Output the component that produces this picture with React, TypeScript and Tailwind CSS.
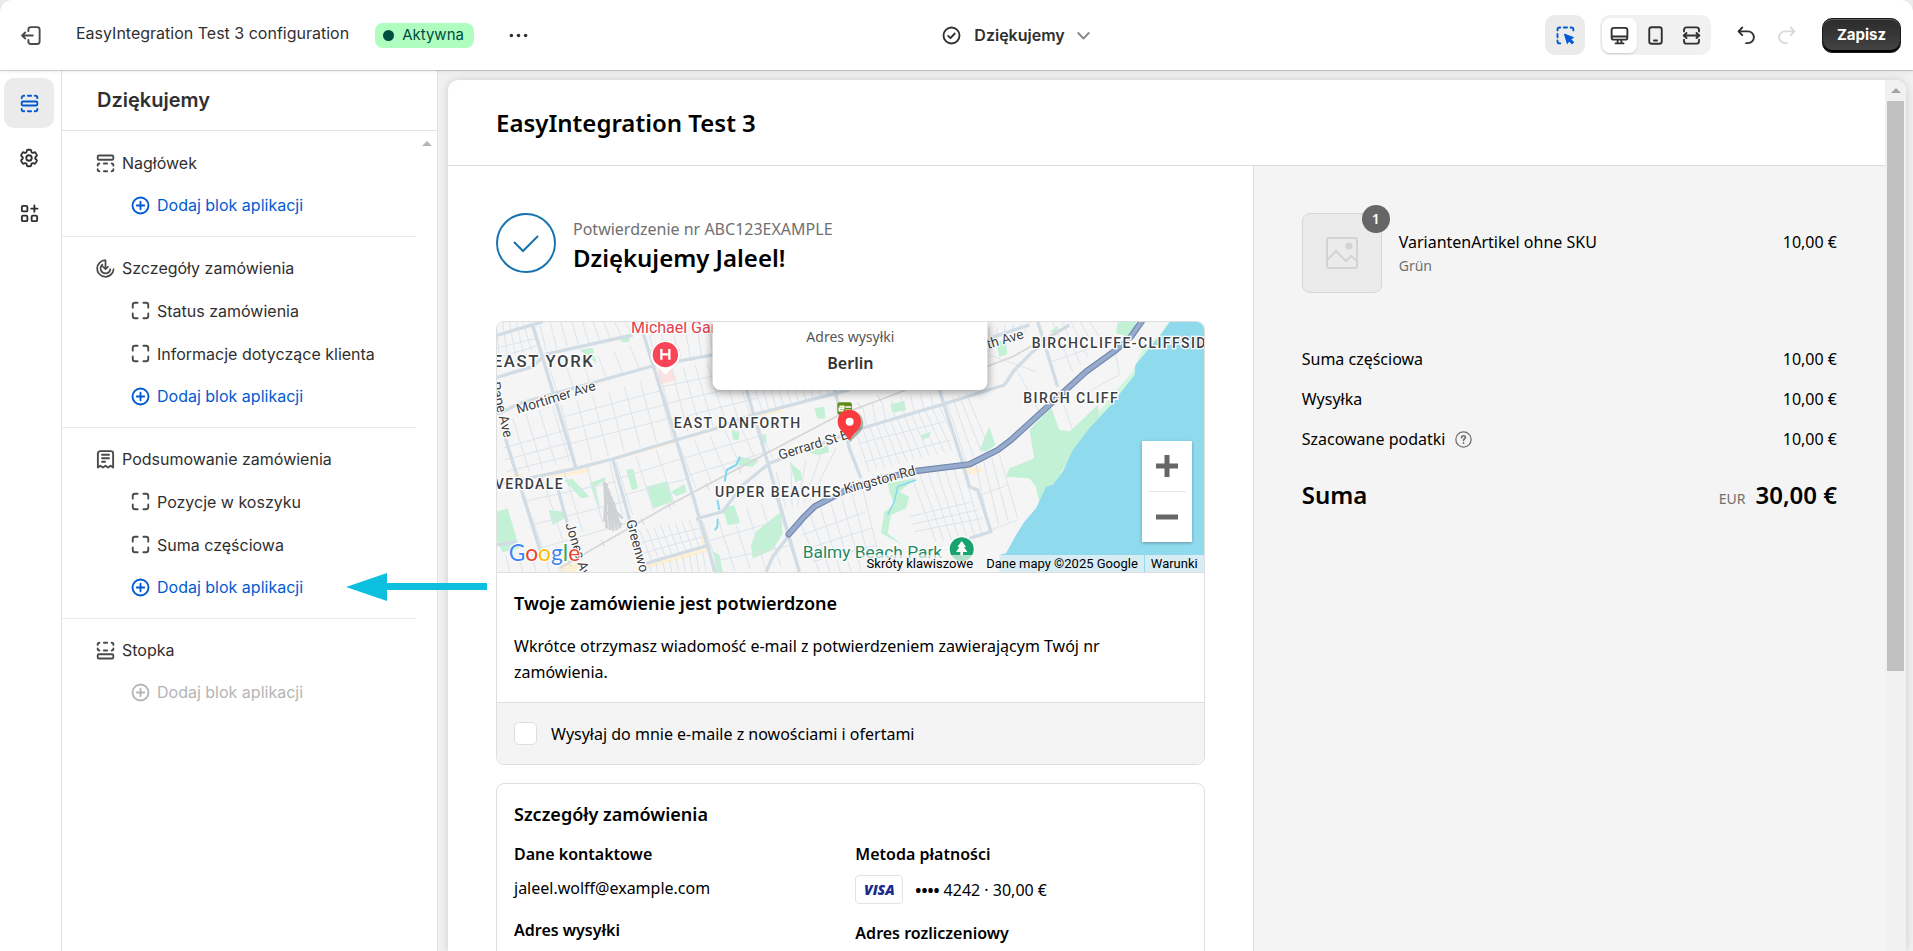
import type { ReactNode } from "react";
import clsx from "clsx";
import { HiOutlineCog6Tooth } from "react-icons/hi2";

/* Icons */

function Icon({ children, className = "size-[25px]" }: { children: ReactNode; className?: string }) {
  return (
    <svg
      viewBox="0 0 20 20"
      fill="none"
      stroke="currentColor"
      strokeWidth={1.5}
      strokeLinecap="round"
      strokeLinejoin="round"
      className={clsx("shrink-0", className)}
      aria-hidden="true"
    >
      {children}
    </svg>
  );
}

const ExitIcon = () => (
  <Icon>
    <path d="M7.5 6.5V5.25a2 2 0 0 1 2-2h5a2 2 0 0 1 2 2v9.5a2 2 0 0 1-2 2h-5a2 2 0 0 1-2-2V13.5M11 10H2.75M5 7.5 2.5 10 5 12.5" />
  </Icon>
);

const SectionsIcon = () => (
  <Icon>
    <rect x="3.75" y="8.4" width="12.5" height="3.2" rx="1" />
    <path d="M3.75 5.7v-.2a1.7 1.7 0 0 1 1.7-1.7h.3M8.7 3.8h2.6M14.2 3.8h.4a1.7 1.7 0 0 1 1.7 1.7v.2M3.75 14.3v.2a1.7 1.7 0 0 0 1.7 1.7h.3M8.7 16.2h2.6M14.2 16.2h.4a1.7 1.7 0 0 0 1.7-1.7v-.2" />
  </Icon>
);

const AppsIcon = () => (
  <Icon>
    <rect x="3.9" y="3.9" width="4.4" height="4.4" rx="1" />
    <rect x="3.9" y="11.7" width="4.4" height="4.4" rx="1" />
    <rect x="11.7" y="11.7" width="4.4" height="4.4" rx="1" />
    <path d="M13.9 3.6v5M11.4 6.1h5" />
  </Icon>
);

const HeaderIcon = () => (
  <Icon>
    <rect x="3.75" y="3.6" width="12.5" height="3.4" rx="1" />
    <path d="M3.75 11.7v-.3a1.4 1.4 0 0 1 1.4-1.4M8.7 10h2.6M14.9 10a1.4 1.4 0 0 1 1.4 1.4v.3M3.75 14.5v.3a1.4 1.4 0 0 0 1.4 1.4M8.7 16.2h2.6M14.9 16.2a1.4 1.4 0 0 0 1.4-1.4v-.3" />
  </Icon>
);

const FooterIcon = () => (
  <Icon>
    <rect x="3.75" y="13" width="12.5" height="3.4" rx="1" />
    <path d="M3.75 5.5v-.3a1.4 1.4 0 0 1 1.4-1.4M8.7 3.8h2.6M14.9 3.8a1.4 1.4 0 0 1 1.4 1.4v.3M3.75 8.3v.3a1.4 1.4 0 0 0 1.4 1.4M8.7 10h2.6M14.9 10a1.4 1.4 0 0 0 1.4-1.4v-.3" />
  </Icon>
);

const OrderStatusIcon = () => (
  <Icon>
    <path d="M10 3.4a6.6 6.6 0 1 0 6.5 7.2M10 3.4V10M8 8.6l2 2 2-2M7.5 7a3.9 3.9 0 0 0 2.5 6.9 3.9 3.9 0 0 0 3.8-3.3" strokeWidth={1.4} />
  </Icon>
);

const ReceiptIcon = () => (
  <Icon>
    <path d="M3.9 16.4V5.2a1.9 1.9 0 0 1 1.9-1.9h8.4a1.9 1.9 0 0 1 1.9 1.9v11.2l-2-1.4-2 1.4-2.1-1.4-2.1 1.4-2-1.4zM7.2 6.2h5.6M7.2 9h5.6M7.2 11.8h2.4" />
  </Icon>
);

const BlockIcon = () => (
  <Icon>
    <path d="M3.8 7.7V5.6a1.8 1.8 0 0 1 1.8-1.8h2.1M12.3 3.8h2.1a1.8 1.8 0 0 1 1.8 1.8v2.1M16.2 12.3v2.1a1.8 1.8 0 0 1-1.8 1.8h-2.1M7.7 16.2H5.6a1.8 1.8 0 0 1-1.8-1.8v-2.1" />
  </Icon>
);

const AddIcon = () => (
  <Icon>
    <circle cx="10" cy="10" r="6.4" />
    <path d="M10 7v6M7 10h6" />
  </Icon>
);

const CheckCircleIcon = () => (
  <Icon>
    <circle cx="10" cy="10" r="6.4" />
    <path d="m7.4 10.4 1.8 1.7 3.4-3.7" />
  </Icon>
);

const ChevronIcon = () => (
  <Icon>
    <path d="m5.8 8 4.2 4.4L14.2 8" />
  </Icon>
);

const DotsIcon = () => (
  <Icon>
    <g fill="currentColor" stroke="none">
      <circle cx="4.3" cy="10" r="1.4" />
      <circle cx="10" cy="10" r="1.4" />
      <circle cx="15.7" cy="10" r="1.4" />
    </g>
  </Icon>
);

const InspectorIcon = () => (
  <Icon>
    <path d="M3.6 5.9v-.5a1.8 1.8 0 0 1 1.8-1.8h.4M8.6 3.6h2.6M14 3.6h.5a1.8 1.8 0 0 1 1.8 1.8v.5M3.6 8.8v2.6M3.6 14v.5a1.8 1.8 0 0 0 1.8 1.8h.4" />
    <path d="m9.3 9.1 6.9 2.5-2.3 1.3 2.4 2.4-1.1 1.1-2.4-2.4-1.3 2.2z" fill="currentColor" strokeWidth={1} />
  </Icon>
);

const DesktopIcon = () => (
  <Icon>
    <rect x="3.7" y="3.9" width="12.6" height="9.4" rx="1.8" />
    <path d="M4 10.8h12M8.5 13.5v2.6M11.5 13.5v2.6M6.8 16.3h6.4" />
  </Icon>
);

const MobileIcon = () => (
  <Icon>
    <rect x="5" y="3.4" width="10" height="13.2" rx="1.9" />
    <path d="M8.8 14h2.4" />
  </Icon>
);

const FullWidthIcon = () => (
  <Icon>
    <path d="M4 6.7V5.5a2 2 0 0 1 2-2h8a2 2 0 0 1 2 2v1.2M4 13.3v1.2a2 2 0 0 0 2 2h8a2 2 0 0 0 2-2v-1.2M3.7 10h12.6M6 8l-2.2 2L6 12M14 8l2.2 2-2.2 2" />
  </Icon>
);

const UndoIcon = () => (
  <Icon>
    <path d="M6.6 3.6 3.6 6.7l3 3M3.9 6.7h7.3a4.7 4.7 0 0 1 0 9.4H9.7" />
  </Icon>
);

const RedoIcon = () => (
  <Icon>
    <path d="m13.4 3.6 3 3.1-3 3M16.1 6.7H8.8a4.7 4.7 0 0 0 0 9.4h1.5" />
  </Icon>
);

/* Top bar */

function TopBar() {
  return (
    <header className="relative z-10 grid h-[70px] shrink-0 grid-cols-[8fr_auto_7fr] items-center rounded-t-xl bg-white pr-3 pl-[19px] shadow-[0_1px_1px_rgba(0,0,0,0.18),0_2px_4px_rgba(0,0,0,0.06)]">
      <div className="flex items-center">
        <button type="button" aria-label="Wyjdź" className="text-[#4a4a4a]">
          <ExitIcon />
        </button>
        <h1 className="ml-8 pb-1">EasyIntegration Test 3 configuration</h1>
        <span className="ml-[26px] flex h-[25px] items-center gap-2 rounded-lg bg-[#affebf] pr-2.5 pl-2 text-[15px] text-[#014b40]">
          <span className="size-[11px] rounded-full bg-[#014b40]" />
          Aktywna
        </span>
        <button type="button" aria-label="Więcej działań" className="ml-8">
          <DotsIcon />
        </button>
      </div>

      <button type="button" className="flex items-center gap-2.5 font-semibold">
        <CheckCircleIcon />
        Dziękujemy
        <span className="-ml-1 text-[#8a8a8a]">
          <ChevronIcon />
        </span>
      </button>

      <div className="flex items-center justify-end">
        <button
          type="button"
          aria-label="Inspektor"
          className="grid size-10 place-items-center rounded-[10px] bg-[#ebebeb] text-[#005bd3]"
        >
          <InspectorIcon />
        </button>
        <div className="ml-[15px] flex h-10 items-center gap-px rounded-[10px] bg-[#f1f1f1] px-0.5">
          <button
            type="button"
            aria-label="Komputer"
            className="grid size-[35px] place-items-center rounded-lg bg-white shadow-[0_1px_2px_rgba(0,0,0,0.15)]"
          >
            <DesktopIcon />
          </button>
          <button type="button" aria-label="Telefon" className="grid size-[35px] place-items-center">
            <MobileIcon />
          </button>
          <button type="button" aria-label="Pełna szerokość" className="grid size-[35px] place-items-center">
            <FullWidthIcon />
          </button>
        </div>
        <button type="button" aria-label="Cofnij" className="ml-[23px]">
          <UndoIcon />
        </button>
        <button type="button" aria-label="Ponów" disabled className="ml-[15px] text-[#d9d9d9]">
          <RedoIcon />
        </button>
        <button
          type="button"
          className="ml-[23px] h-[35px] w-[79px] rounded-[10px] border border-[#1a1a1a] bg-linear-to-b from-[#2b2b2b] to-[#454545] text-[15px] font-bold text-white shadow-[inset_0_1px_0_#5c5c5c,inset_0_-2px_0_#000]"
        >
          Zapisz
        </button>
      </div>
    </header>
  );
}

/* Sidebar */

function Rail() {
  return (
    <nav className="flex w-[62px] shrink-0 flex-col gap-[5px] border-r border-[#e3e3e3] bg-white px-1 pt-2">
      <button
        type="button"
        aria-label="Sekcje"
        className="grid size-[50px] place-items-center rounded-[10px] bg-[#ebebeb] text-[#005bd3]"
      >
        <SectionsIcon />
      </button>
      <button type="button" aria-label="Ustawienia" className="grid size-[50px] place-items-center">
        <HiOutlineCog6Tooth className="size-[22px] stroke-2" />
      </button>
      <button type="button" aria-label="Aplikacje" className="grid size-[50px] place-items-center">
        <AppsIcon />
      </button>
    </nav>
  );
}

type Section = { title: string; icon: ReactNode; blocks: string[]; disabled?: boolean };

const sections: Section[] = [
  { title: "Nagłówek", icon: <HeaderIcon />, blocks: [] },
  {
    title: "Szczegóły zamówienia",
    icon: <OrderStatusIcon />,
    blocks: ["Status zamówienia", "Informacje dotyczące klienta"],
  },
  {
    title: "Podsumowanie zamówienia",
    icon: <ReceiptIcon />,
    blocks: ["Pozycje w koszyku", "Suma częściowa"],
  },
  { title: "Stopka", icon: <FooterIcon />, blocks: [], disabled: true },
];

function Sidebar() {
  return (
    <aside className="flex w-[376px] shrink-0 flex-col border-r border-[#e3e3e3] bg-white">
      <h2 className="flex h-[61px] shrink-0 items-center border-b border-[#e3e3e3] px-[35px] text-xl font-semibold">
        Dziękujemy
      </h2>
      <div className="flex flex-1">
        <div className="flex-1 pt-px">
          {sections.map((section) => (
            <section key={section.title} className="border-b border-[#ebebeb] py-2.5 last:border-b-0">
              <h3 className="flex h-[42px] items-center gap-1 pl-[31px]">
                <span className="text-[#4a4a4a]">{section.icon}</span>
                {section.title}
              </h3>
              <ul>
                {section.blocks.map((block) => (
                  <li key={block}>
                    <button type="button" className="flex h-[43px] items-center gap-1 pl-[66px]">
                      <span className="text-[#4a4a4a]">
                        <BlockIcon />
                      </span>
                      {block}
                    </button>
                  </li>
                ))}
                <li>
                  <button
                    type="button"
                    disabled={section.disabled}
                    className="flex h-[42px] items-center gap-1 pl-[66px] text-[#005bd3] disabled:text-[#b5b5b5]"
                  >
                    <AddIcon />
                    Dodaj blok aplikacji
                  </button>
                </li>
              </ul>
            </section>
          ))}
        </div>
        <div className="flex w-[21px] justify-center pt-2.5">
          <svg viewBox="0 0 10 5" className="h-[5px] w-[10px] fill-[#b5b5b5]" aria-hidden="true">
            <path d="M0 5 5 0l5 5z" />
          </svg>
        </div>
      </div>
    </aside>
  );
}

/* Map */

type Point = [number, number];

// evenly spaced streets running between two edges of a city block
function hatch(a: Point, b: Point, c: Point, d: Point, count: number) {
  let path = "";
  for (let i = 0; i <= count; i++) {
    const t = i / count;
    const x1 = Math.round(a[0] + (b[0] - a[0]) * t);
    const y1 = Math.round(a[1] + (b[1] - a[1]) * t);
    const x2 = Math.round(c[0] + (d[0] - c[0]) * t);
    const y2 = Math.round(c[1] + (d[1] - c[1]) * t);
    path += `M${x1} ${y1}L${x2} ${y2}`;
  }
  return path;
}

const streets = [
  hatch([150, 20], [440, 20], [170, 105], [460, 55], 9),
  hatch([30, 130], [150, 100], [20, 20], [120, 20], 5),
  hatch([20, 100], [20, 160], [140, 70], [160, 110], 2),
  hatch([180, 160], [470, 80], [205, 235], [500, 150], 6),
  hatch([30, 320], [190, 275], [80, 480], [240, 440], 4),
  hatch([40, 400], [50, 470], [230, 345], [250, 420], 2),
  hatch([215, 270], [500, 185], [260, 450], [550, 370], 6),
  hatch([225, 305], [245, 385], [520, 225], [540, 310], 2),
  hatch([510, 170], [760, 120], [560, 365], [820, 290], 7),
  hatch([520, 215], [545, 315], [780, 160], [800, 250], 2),
  hatch([820, 220], [1020, 175], [840, 290], [1040, 235], 9),
  hatch([480, 60], [660, 30], [500, 140], [670, 115], 5),
  hatch([90, 500], [360, 440], [160, 700], [400, 600], 4),
  hatch([100, 560], [150, 700], [380, 500], [430, 620], 2),
  hatch([380, 440], [560, 385], [430, 600], [620, 560], 3),
  hatch([390, 490], [400, 540], [580, 430], [600, 490], 1),
  hatch([430, 650], [620, 610], [470, 750], [650, 690], 9),
  hatch([430, 690], [440, 720], [630, 640], [640, 665], 1),
  hatch([570, 390], [800, 320], [620, 520], [850, 430], 5),
  hatch([580, 430], [600, 480], [820, 360], [835, 410], 1),
  hatch([640, 620], [860, 550], [690, 770], [920, 750], 5),
  hatch([650, 680], [670, 740], [890, 610], [910, 690], 1),
  hatch([480, 750], [640, 710], [485, 771], [650, 771], 8),
  hatch([50, 720], [200, 690], [60, 771], [220, 771], 4),
  hatch([860, 470], [1040, 400], [890, 580], [960, 560], 4),
  hatch([1100, 350], [1350, 275], [1140, 470], [1410, 400], 12),
  hatch([1110, 385], [1130, 440], [1365, 320], [1385, 375], 1),
  hatch([1120, 270], [1350, 225], [1130, 330], [1360, 265], 8),
  hatch([1370, 255], [1430, 235], [1430, 440], [1500, 400], 3),
  hatch([1265, 480], [1420, 460], [1340, 680], [1480, 665], 6),
  hatch([1260, 605], [1275, 650], [1450, 560], [1480, 610], 2),
  hatch([1460, 450], [1530, 420], [1500, 640], [1585, 610], 3),
  hatch([1475, 540], [1490, 650], [1555, 510], [1585, 615], 1),
  hatch([930, 610], [1120, 520], [990, 771], [1180, 771], 6),
  hatch([940, 660], [970, 740], [1130, 590], [1160, 690], 2),
  hatch([1500, 40], [1620, 20], [1500, 110], [1600, 60], 5),
  hatch([1690, 20], [1800, 20], [1750, 170], [1840, 80], 4),
  "M1500 120L1640 170M1580 160L1650 290M1720 260L1750 345L1770 340L1800 300L1860 275M1685 140L1890 70M1870 60L1890 180L1850 200L1790 235",
];

const avenues = [
  "M20 62L160 20",
  "M130 30L260 460",
  "M20 188L130 155L168 118L430 60",
  "M20 300L90 265L500 150L680 118",
  "M48 370L155 715",
  "M460 50L560 372L660 710L676 771",
  "M20 510L260 460L370 432L560 375L680 340L790 300L1040 235L1080 225",
  "M205 520L260 720",
  "M370 432L425 630L470 771",
  "M770 220L840 460L930 771",
  "M1035 220L1080 400L1115 490",
  "M620 612L700 590L760 510L840 445L1000 385L1100 345L1360 268L1545 210L1575 165L1625 115L1690 60L1740 30",
  "M1350 225L1425 460L1440 515L1465 525L1505 650L1440 670",
  "M1645 20L1705 215",
  "M830 771L850 725L900 660",
  "M470 745L660 690M20 690L80 680",
  "M1500 70L1620 30",
];

const parks = [
  "M20 590L55 580L90 700L40 712L20 670z",
  "M225 495L250 492L300 545L275 550z",
  "M302 505L350 485L345 498L318 512L332 580L320 560z",
  "M410 465L432 462L446 520L428 526z",
  "M472 515L535 498L550 560L493 580z",
  "M545 530L585 508L592 530L560 544z",
  "M178 585L225 590L228 608L190 630z",
  "M700 580L735 570L752 625L715 630z",
  "M750 425L808 435L790 455L740 450z",
  "M726 345L750 350L748 375L732 374z",
  "M800 650L875 590L880 655L850 705L790 730L785 690z",
  "M975 280L1005 275L1008 310L985 312z",
  "M900 440L935 470L938 495L918 500z",
  "M955 410L1015 390L1020 412L985 420z",
  "M270 105L310 98L322 145L290 120z",
  "M392 68L420 62L420 80L398 82z",
  "M812 360L830 358L832 380L820 390z",
  "M672 710L690 720L700 771L680 771z",
  "M1202 268L1245 258L1250 285L1210 293z",
  "M1295 360L1325 350L1320 365L1298 376z",
  "M1500 335L1518 390L1490 410L1470 405z",
  "M1520 80L1550 75L1553 118L1530 126z",
  "M1680 50L1705 32L1708 55z",
  "M1885 20L1940 20L1930 70L1880 55z",
  "M1195 505L1280 490L1230 530L1260 545L1250 580L1205 600L1195 655L1240 690L1175 655L1185 590L1215 570L1200 530z",
  "M1620 345L1685 275L1710 345L1745 350L1750 400L1700 480L1660 540L1620 490L1550 485L1560 460L1635 430z",
];

const labelStyle = "fill-[#3c4043] stroke-white stroke-[8px] font-[Roboto] font-medium tracking-widest";
const roadStyle = "fill-[#3c4043] stroke-white stroke-[7px] font-[Roboto] text-[41px]";

function CityMap() {
  return (
    <svg
      viewBox="21 21 2124 750"
      preserveAspectRatio="xMidYMid slice"
      className="h-full w-full bg-[#f5f5f5] [paint-order:stroke]"
      role="img"
      aria-label="Mapa"
    >
      <g className="fill-[#c3f1d5]">
        {parks.map((d) => (
          <path key={d} d={d} />
        ))}
      </g>
      <path d="M505 165L550 160L562 195L512 208z" className="fill-[#fde2e2]" />
      <path
        d="M60 480L100 475L100 492L40 505zM170 485L300 458L300 472L200 490zM370 428L560 370L560 384L375 436zM770 300L880 275L880 290L780 312zM635 665L655 655L665 700L640 712zM470 745L640 700L650 712L475 760zM1425 460L1475 455L1475 472L1440 480zM215 750L270 740L260 771L205 771z"
        className="fill-[#fdf0d5]"
      />
      <g fill="none" strokeLinejoin="round">
        <path d={streets.join("")} className="stroke-[#dbe4ec] stroke-[3px]" />
        <path d={avenues.join("")} className="stroke-[#d2dce5] stroke-[10px]" />
        <path
          d="M210 760L540 570L860 400L1050 300L1250 225M1490 155L1570 125L1730 35"
          className="stroke-[#d5d6d8] stroke-[5px]"
        />
        <path d="M235 735L245 755M335 675L345 695M455 610L465 630M535 565L545 585M650 505L660 525M745 455L755 475M1105 262L1115 282M1165 240L1175 260" className="stroke-[#d5d6d8] stroke-[3px]" />
        <path d="M752 425L740 450L712 465L706 500M684 555L690 585M685 612L684 635L676 646" className="stroke-[#82d7ee] stroke-[6px]" />
        <path d="M1280 495L1225 515L1215 560L1195 600" className="stroke-[#82d7ee] stroke-[4px]" />
        <path
          d="M345 500L352 640M352 505L345 620M356 520L362 645M360 530L372 648M366 545L382 645M372 560L392 640M350 560L400 610M348 590L398 630"
          className="stroke-[#cfd1d4] stroke-[8px]"
        />
      </g>
      <path
        d="M2040 20L2010 60L1960 100L1930 170L1860 250L1800 330L1750 350L1740 450L1660 530L1650 570L1610 630L1570 690L1540 725L1535 771L2145 771L2145 20z"
        className="fill-[#d0f6dd]"
      />
      <path d="M1740 350L1825 270L1830 310L1745 420L1700 500L1650 560L1640 520z" className="fill-[#c3f1d5]" />
      <path
        d="M2042 20L2012 62L1975 105L1938 150L1936 180L1900 225L1860 275L1800 340L1750 405L1720 470L1690 510L1670 515L1640 580L1605 620L1580 660L1550 715L1530 720L1530 771L2145 771L2145 20z"
        className="fill-[#90daee]"
      />
      <g fill="none" strokeLinejoin="round" strokeLinecap="round">
        <path
          d="M898 658L940 610L975 575L1060 530L1180 490L1280 468L1440 448L1525 405L1565 375L1680 270L1790 170L1880 105L1925 65L1960 15"
          className="stroke-[#7288b0] stroke-[19px]"
        />
        <path
          d="M898 658L940 610L975 575L1060 530L1180 490L1280 468L1440 448L1525 405L1565 375L1680 270L1790 170L1880 105L1925 65L1960 15"
          className="stroke-[#97abcd] stroke-[12px]"
        />
      </g>

      <text x="10" y="155" className={clsx(labelStyle, "text-[50px]")}>EAST YORK</text>
      <text x="553" y="338" className={clsx(labelStyle, "text-[42px]")}>EAST DANFORTH</text>
      <text x="0" y="521" className={clsx(labelStyle, "text-[42px]")}>IVERDALE</text>
      <text x="677" y="545" className={clsx(labelStyle, "text-[42px]")}>UPPER BEACHES</text>
      <text x="1627" y="98" className={clsx(labelStyle, "text-[42px]")}>BIRCHCLIFFE-CLIFFSIDE</text>
      <text x="1602" y="264" className={clsx(labelStyle, "text-[42px]")}>BIRCH CLIFF</text>
      <text transform="translate(86 296) rotate(-17)" className={roadStyle}>Mortimer Ave</text>
      <text transform="translate(3 205) rotate(76)" className={roadStyle}>Pape Ave</text>
      <text transform="translate(228 628) rotate(73)" className={roadStyle}>Jones Ave</text>
      <text transform="translate(410 618) rotate(75)" className={roadStyle}>Greenwood Ave</text>
      <text transform="translate(872 434) rotate(-17)" className={roadStyle}>Gerrard St E</text>
      <text transform="translate(1068 536) rotate(-15)" className={roadStyle}>Kingston Rd</text>
      <text transform="translate(1378 138) rotate(-17)" className={roadStyle}>Danforth Ave</text>
      <text x="425" y="53" className="fill-[#e0414f] stroke-white stroke-[7px] font-[Roboto] text-[48px]">
        Michael Garron
      </text>
      <text x="940" y="730" className="fill-[#1f8a62] stroke-white stroke-[7px] font-[Roboto] text-[52px]">
        Balmy Beach Park
      </text>

      {/* hospital */}
      <path d="M528 76a44 44 0 0 1 44 44c0 22-16 36-28 44-8 6-10 14-16 14s-8-8-16-14c-12-8-28-22-28-44a44 44 0 0 1 44-44z" className="fill-white stroke-[#c9c9c9] stroke-2" />
      <circle cx="528" cy="119" r="38" className="fill-[#fa4557]" />
      <path d="M516 102V134M540 102V134M516 118H540" fill="none" className="stroke-white stroke-[7px]" />

      {/* park */}
      <circle cx="1417" cy="703" r="40" className="fill-white" />
      <circle cx="1417" cy="703" r="36" className="fill-[#18a36f]" />
      <path d="M1417 678L1430 696H1424L1434 711H1421V720H1413V711H1400L1410 696H1404z" className="fill-white" />

      {/* station and drop pin */}
      <rect x="1044" y="262" width="44" height="38" rx="8" className="fill-[#5f8b17]" />
      <path d="M1050 274h13v6h-13v7h13M1068 276h18M1068 286h18" fill="none" className="stroke-white stroke-[5px]" />
      <path
        d="M1084 288c22 0 38 16 38 38 0 28-28 36-38 56-12-22-34-32-34-56 0-22 14-38 34-38z"
        className="fill-[#2e5a3a] opacity-40"
      />
      <path
        d="M1080 284c21 0 35 15 35 36 0 26-23 32-30 50-3 7-7 7-10 0-7-18-30-24-30-50 0-21 14-36 35-36z"
        className="fill-[#fb3a3f]"
      />
      <circle cx="1081" cy="320" r="12" className="fill-white" />

      <text x="58" y="739" className="stroke-white stroke-[6px] font-[Lato] text-[68px]">
        <tspan className="fill-[#4285f4]">G</tspan>
        <tspan className="fill-[#ea4335]">o</tspan>
        <tspan className="fill-[#fbbc05]">o</tspan>
        <tspan className="fill-[#4285f4]">g</tspan>
        <tspan className="fill-[#34a853]">l</tspan>
        <tspan className="fill-[#ea4335]">e</tspan>
      </text>
    </svg>
  );
}

function ShippingMap() {
  return (
    <div className="relative h-[250px] overflow-hidden rounded-t-lg">
      <CityMap />
      <div className="absolute top-0 left-1/2 flex w-[275px] -translate-x-1/2 flex-col items-center rounded-b-lg bg-white pt-0.5 pb-3.5 shadow-[0_2px_8px_rgba(0,0,0,0.4)]">
        <span className="text-sm leading-[26px] text-[#555]">Adres wysyłki</span>
        <span className="leading-[26px] font-semibold text-[#333]">Berlin</span>
      </div>
      <div className="absolute right-3 bottom-[30px] flex w-[50px] flex-col bg-white px-1.5 text-[#666] shadow-[0_1px_3px_rgba(0,0,0,0.3)]">
        <button type="button" aria-label="Powiększ" className="grid h-[50px] place-items-center">
          <svg viewBox="0 0 22 22" className="size-[22px] stroke-current stroke-[5px]">
            <path d="M11 0v22M0 11h22" />
          </svg>
        </button>
        <button type="button" aria-label="Pomniejsz" className="grid h-[51px] place-items-center border-t border-[#e6e6e6]">
          <svg viewBox="0 0 22 22" className="size-[22px] stroke-current stroke-[5px]">
            <path d="M0 11h22" />
          </svg>
        </button>
      </div>
      <div className="absolute right-0 bottom-0 flex h-[17px] items-center gap-px font-[Roboto] text-[13px] leading-[17px] text-black">
        <button type="button" className="bg-[#f5f5f5]/70 px-1.5">Skróty klawiszowe</button>
        <span className="bg-[#f5f5f5]/70 px-1.5">Dane mapy ©2025 Google</span>
        <a href="#warunki" className="bg-[#f5f5f5]/70 px-1.5">Warunki</a>
      </div>
    </div>
  );
}

/* Checkout preview */

function Confirmation() {
  return (
    <div className="w-[calc(56%+1px)] shrink-0 border-r border-[#dedede] px-12 pt-[47px]">
      <div className="flex items-center gap-[17px]">
        <svg viewBox="0 0 60 60" className="size-[60px] fill-none stroke-[#1773b0] stroke-2" aria-hidden="true">
          <circle cx="30" cy="30" r="29" />
          <path d="m18 29 9 9 15-15" />
        </svg>
        <div className="pt-[3px]">
          <p className="leading-[26px] text-[#707070]">Potwierdzenie nr ABC123EXAMPLE</p>
          <h2 className="text-2xl leading-[31px] font-semibold">Dziękujemy Jaleel!</h2>
        </div>
      </div>

      <div className="mt-12 rounded-lg border border-[#dedede]">
        <ShippingMap />
        <div className="border-t border-[#dedede] px-[17px] pt-[17px] pb-[17px]">
          <h3 className="text-lg leading-[26px] font-semibold">Twoje zamówienie jest potwierdzone</h3>
          <p className="mt-[17px] leading-[26px]">
            Wkrótce otrzymasz wiadomość e-mail z potwierdzeniem zawierającym Twój nr zamówienia.
          </p>
        </div>
        <label className="flex h-[62px] items-center gap-3.5 rounded-b-lg border-t border-[#dedede] bg-[#f4f4f4] px-[17px]">
          <input type="checkbox" className="size-[23px] appearance-none rounded-[5px] border border-[#dedede] bg-white" />
          Wysyłaj do mnie e-maile z nowościami i ofertami
        </label>
      </div>

      <div className="mt-[18px] rounded-lg border border-[#dedede] px-[17px] pt-[17px] pb-12">
        <h3 className="text-lg leading-[26px] font-semibold">Szczegóły zamówienia</h3>
        <div className="mt-3.5 grid grid-cols-2">
          <div>
            <h4 className="leading-[26px] font-semibold">Dane kontaktowe</h4>
            <p className="mt-2 leading-[26px]">jaleel.wolff@example.com</p>
            <h4 className="mt-4 leading-[26px] font-semibold">Adres wysyłki</h4>
          </div>
          <div className="pl-[5px]">
            <h4 className="leading-[26px] font-semibold">Metoda płatności</h4>
            <p className="mt-2 flex h-[29px] items-center gap-3">
              <span className="grid h-[29px] w-[48px] place-items-center rounded border border-[#e3e3e3] bg-white font-['Open_Sans'] text-sm font-extrabold text-[#1a2a8a] italic">
                VISA
              </span>
              <span>
                <span className="font-bold">••••</span> 4242 · 30,00 €
              </span>
            </p>
            <h4 className="mt-4 leading-[26px] font-semibold">Adres rozliczeniowy</h4>
          </div>
        </div>
      </div>
    </div>
  );
}

function OrderSummary() {
  return (
    <div className="flex-1 bg-[#f4f4f4] px-12 pt-[47px]">
      <div className="flex items-center gap-[17px]">
        <div className="relative grid size-20 place-items-center rounded-lg border border-[#d6d6d6] bg-[#ebebeb]">
          <svg viewBox="0 0 32 32" className="size-8 fill-none stroke-[#d3d3d3] stroke-2" aria-hidden="true">
            <rect x="1" y="1" width="30" height="30" rx="2" />
            <path d="m1 23 9-9 10 10 5-5 6 5" />
            <circle cx="23" cy="9" r="2.5" fill="#d3d3d3" />
          </svg>
          <span className="absolute -top-[9px] -right-[9px] grid size-7 place-items-center rounded-full bg-[#666] text-sm font-semibold text-white">
            1
          </span>
        </div>
        <div className="flex-1">
          <p className="leading-[26px]">VariantenArtikel ohne SKU</p>
          <p className="text-sm leading-[22px] text-[#707070]">Grün</p>
        </div>
        <p className="pb-[22px] leading-[26px]">10,00 €</p>
      </div>

      <dl className="mt-[53px] flex flex-col gap-3.5 leading-[26px]">
        <div className="flex justify-between">
          <dt>Suma częściowa</dt>
          <dd>10,00 €</dd>
        </div>
        <div className="flex justify-between">
          <dt>Wysyłka</dt>
          <dd>10,00 €</dd>
        </div>
        <div className="flex justify-between">
          <dt className="flex items-center gap-2.5">
            Szacowane podatki
            <Icon className="size-[17px] text-[#707070]">
              <circle cx="10" cy="10" r="9" />
              <path d="M7.8 7.8c0-1.4 1-2.2 2.2-2.2s2.2.9 2.2 2c0 1.700-2.200 1.800-2.200 3.400M10 14v.2" strokeWidth={2} />
            </Icon>
          </dt>
          <dd>10,00 €</dd>
        </div>
        <div className="mt-3 flex items-baseline justify-between text-2xl leading-[34px] font-semibold">
          <dt>Suma</dt>
          <dd className="flex items-baseline gap-2.5">
            <span className="text-sm font-normal text-[#707070]">EUR</span>
            30,00 €
          </dd>
        </div>
      </dl>
    </div>
  );
}

function Preview() {
  return (
    <main className="flex min-w-0 flex-1 bg-[#f1f1f1] pt-[10px] pr-[7px] pl-[10px]">
      <div className="flex flex-1 overflow-hidden rounded-t-[10px] bg-white font-['Noto_Sans','Open_Sans',sans-serif] text-black shadow-[0_0_10px_rgba(0,0,0,0.15)]">
        <div className="flex min-w-0 flex-1 flex-col">
          <h1 className="flex h-[86px] shrink-0 items-center border-b border-[#dedede] px-12 text-2xl font-semibold">
            EasyIntegration Test 3
          </h1>
          <div className="flex flex-1">
            <Confirmation />
            <OrderSummary />
          </div>
        </div>
        <div className="flex w-[21px] flex-col items-center bg-[#f1f1f1]">
          <svg viewBox="0 0 10 5" className="my-2 h-[5px] w-[10px] shrink-0 fill-[#a3a3a3]" aria-hidden="true">
            <path d="M0 5 5 0l5 5z" />
          </svg>
          <span className="w-[17px] flex-[67] bg-[#c1c1c1]" />
          <span className="flex-[33]" />
        </div>
      </div>
    </main>
  );
}

export default function App() {
  return (
    <div className="relative flex h-screen flex-col overflow-hidden bg-[#ebebeb] font-[Inter,sans-serif] text-base text-[#303030]">
      <TopBar />
      <div className="flex min-h-0 flex-1">
        <Rail />
        <Sidebar />
        <Preview />
      </div>
      {/* pointer to the add block action */}
      <svg viewBox="0 0 141 28" className="absolute top-[573px] left-[346px] z-20 h-7 w-[141px] fill-[#0dbfdf]" aria-hidden="true">
        <path d="M0 14 41 0v10h100v7H41v11z" />
      </svg>
    </div>
  );
}
